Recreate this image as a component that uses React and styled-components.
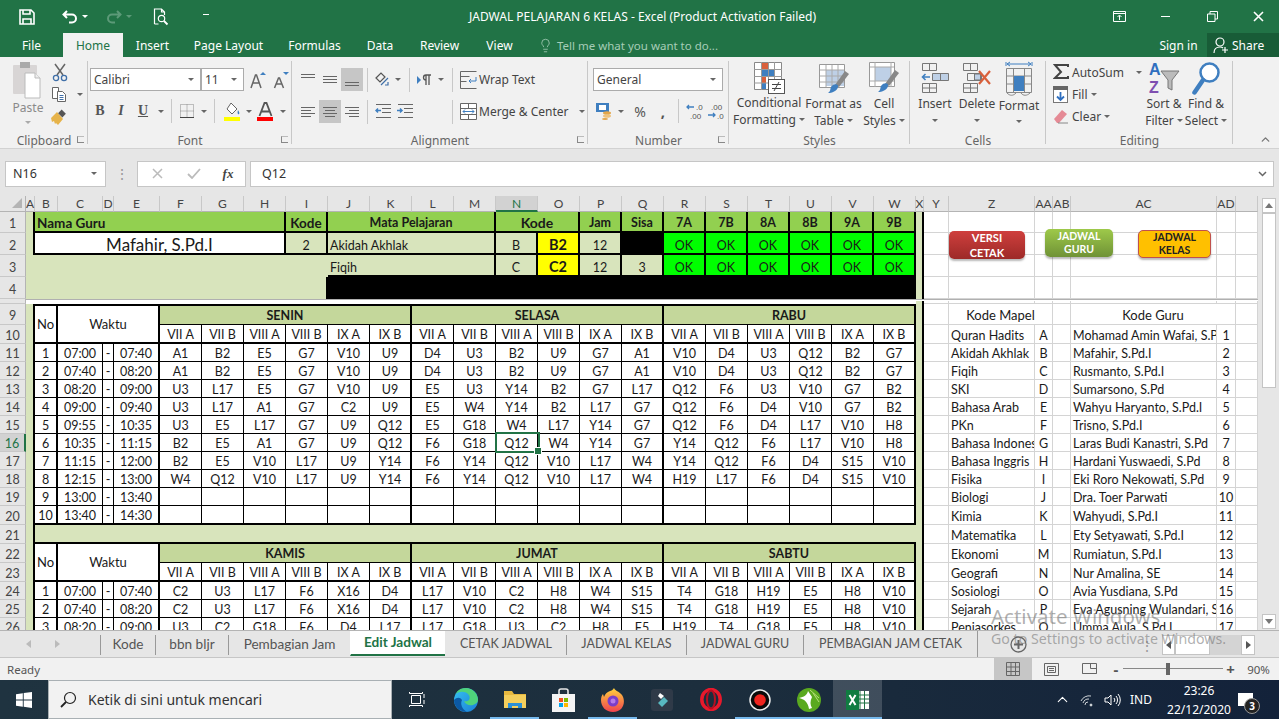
import React from 'react';
import styled, { createGlobalStyle } from 'styled-components';
import { ChevronUp, Lightbulb } from 'lucide-react';

const GlobalStyle = createGlobalStyle`
  html, body { margin: 0; padding: 0; overflow: hidden; background: #fff; }
  * { box-sizing: border-box; }
  svg { display: block; flex: none; }
`;

const UI = '"Noto Sans", "Open Sans", sans-serif';
const BOOK = 'Lato, "Open Sans", sans-serif';
const LIGHT = '#d8e4bc';
const HEAD = '#92d050';
const DAY = '#c4d79b';
const GRID = '#d4d4d4';

/* window shell */
const Page = styled.div`
  position: relative;
  width: 1279px;
  height: 719px;
  overflow: hidden;
  display: flex;
  flex-direction: column;
  font-family: ${UI};
  color: #444;
`;

const TitleBar = styled.div`
  height: 33px;
  background: #217346;
  display: flex;
  align-items: center;
  color: #fff;
  flex: none;
`;

const Qat = styled.div`
  width: 469px;
  display: flex;
  align-items: center;
  flex: none;
`;

const Slot = styled.div`
  width: ${(p) => p.$w}px;
  height: ${(p) => p.$h || 22}px;
  display: flex;
  align-items: center;
  justify-content: center;
  flex: none;
  background: ${(p) => p.$bg || 'transparent'};
`;

const Title = styled.div`
  flex: 1;
  font-size: 12px;
  white-space: nowrap;
`;

const TabBar = styled.div`
  height: 24px;
  background: #217346;
  display: flex;
  align-items: stretch;
  color: #fff;
  font-size: 12px;
  flex: none;
`;

const Tab = styled.div`
  width: ${(p) => p.$w}px;
  display: flex;
  align-items: center;
  justify-content: center;
  flex: none;
  padding-left: ${(p) => p.$pl || 0}px;
  background: ${(p) => (p.$active ? '#f1f1f1' : 'transparent')};
  color: ${(p) => (p.$active ? '#217346' : '#fff')};
`;

const Tell = styled.div`
  flex: 1;
  display: flex;
  align-items: center;
  gap: 4px;
  padding-left: 12px;
  color: #a6cdb7;
  font-size: 11.5px;
`;

const ShareTab = styled.div`
  width: 72px;
  background: #185c37;
  display: flex;
  align-items: center;
  gap: 3px;
  padding-left: 6px;
`;

/* ribbon */
const Ribbon = styled.div`
  height: 92px;
  background: #f1f1f1;
  border-bottom: 1px solid #d2d2d2;
  display: flex;
  color: #444;
  font-size: 12px;
  flex: none;
`;

const Group = styled.div`
  width: ${(p) => p.$w}px;
  flex: none;
  display: flex;
  flex-direction: column;
  position: relative;
  padding-top: 4px;
  &::after {
    content: '';
    position: absolute;
    right: 0;
    top: 4px;
    bottom: 4px;
    width: 1px;
    background: #c8c8c8;
  }
`;

const GroupBody = styled.div`
  flex: 1;
  display: flex;
  padding-left: ${(p) => p.$pl || 0}px;
  min-height: 0;
`;

const GroupLabel = styled.div`
  height: 20px;
  padding-top: 4px;
  font-size: 12px;
  color: #666;
  display: flex;
  align-items: center;
  justify-content: center;
  position: relative;
`;

const Launcher = styled.span`
  position: absolute;
  right: 4px;
  top: 8px;
  width: 7px;
  height: 7px;
  border-left: 1px solid #888;
  border-bottom: 1px solid #888;
  border-top: 1px solid #bbb;
`;

const Stack = styled.div`
  display: flex;
  flex-direction: column;
  width: ${(p) => (p.$w ? `${p.$w}px` : 'auto')};
  flex: none;
`;

const Collapse = styled.div`
  flex: 1;
  display: flex;
  align-items: flex-end;
  justify-content: flex-end;
  padding: 0 7px 2px 0;
`;

const Line = styled.div`
  display: flex;
  align-items: center;
  height: ${(p) => p.$h || 24}px;
  margin-top: ${(p) => p.$mt || 0}px;
  padding-left: ${(p) => p.$pl || 0}px;
  white-space: nowrap;
`;

const Caret = styled.span`
  width: 0;
  height: 0;
  border-left: 3px solid transparent;
  border-right: 3px solid transparent;
  border-top: 3px solid ${(p) => p.$c || '#666'};
  margin-left: ${(p) => p.$ml || 0}px;
  flex: none;
`;

const Sep = styled.div`
  width: 1px;
  height: 24px;
  background: #c8c8c8;
  margin: 0 ${(p) => p.$m ?? 4}px;
  flex: none;
`;

const Select = styled.div`
  width: ${(p) => p.$w}px;
  height: 23px;
  background: #fff;
  border: 1px solid #ababab;
  margin-left: ${(p) => p.$ml || 0}px;
  display: flex;
  align-items: center;
  justify-content: space-between;
  padding: 0 6px 0 3px;
  font-size: 12px;
  flex: none;
`;

const BigBtn = styled.div`
  width: ${(p) => p.$w}px;
  flex: none;
  display: flex;
  flex-direction: column;
  align-items: center;
  text-align: center;
  font-size: 12px;
  color: ${(p) => (p.$dim ? '#8a8a8a' : '#444')};
  white-space: nowrap;
`;

const BigIcon = styled.div`
  height: 37px;
  display: flex;
  align-items: center;
  justify-content: center;
`;

const LabelLine = styled.div`
  height: 17px;
  display: flex;
  align-items: center;
  justify-content: center;
  gap: 3px;
`;

const Caption = styled.span`
  margin-left: ${(p) => p.$ml || 1}px;
`;

const SmallBold = styled.span`
  font-family: "Liberation Serif", serif;
  font-weight: 700;
  font-style: ${(p) => (p.$i ? 'italic' : 'normal')};
  text-decoration: ${(p) => (p.$u ? 'underline' : 'none')};
  font-size: 14px;
  color: #555;
`;

const Glyph = styled.span`
  font-size: ${(p) => p.$fs || 14}px;
  font-weight: ${(p) => p.$fw || 400};
  color: #555;
`;

/* formula bar */
const FormulaBar = styled.div`
  height: 47px;
  background: #e6e6e6;
  display: flex;
  align-items: center;
  padding: 2px 5px 0;
  font-size: 12.5px;
  flex: none;
`;

const NameBox = styled.div`
  width: 101px;
  height: 26px;
  background: #fff;
  border: 1px solid #c6c6c6;
  display: flex;
  align-items: center;
  justify-content: space-between;
  padding: 0 8px 0 7px;
  color: #333;
`;

const Dots = styled.div`
  width: 31px;
  text-align: center;
  color: #999;
  font-size: 14px;
`;

const FxBox = styled.div`
  width: 109px;
  height: 26px;
  background: #fff;
  border: 1px solid #c6c6c6;
  display: flex;
  align-items: center;
  flex: none;
`;

const Fx = styled.span`
  font-family: "Liberation Serif", serif;
  font-style: italic;
  font-weight: 700;
  font-size: 13px;
`;

const FormulaInput = styled.div`
  flex: 1;
  height: 26px;
  margin-left: 4px;
  background: #fff;
  border: 1px solid #c6c6c6;
  display: flex;
  align-items: center;
  justify-content: space-between;
  padding: 0 6px 0 11px;
  color: #333;
`;

/* sheet */
const SheetArea = styled.div`
  height: 434px;
  display: flex;
  overflow: hidden;
  flex: none;
  background: #e6e6e6;
`;

const Sheet = styled.div`
  width: 1258px;
  flex: none;
  display: grid;
  grid-template-columns: 26px 9px 23px 45px 11px 46px repeat(18, 42px) 8px 25px 86px 18px 18px 146px 19px 22px;
  grid-template-rows: 16px 21px 22px 22px 22px 2px 3px 21px 19px repeat(8, 18px) 18px 19px 19px 19px 19px 18px 18px 18px;
  font-family: ${BOOK};
  font-size: 12.5px;
  color: #1a1a1a;
  background: #fff;
`;

const Cell = styled.div`
  grid-column: ${(p) => p.$c} / span ${(p) => p.$cs || 1};
  grid-row: ${(p) => p.$r} / span ${(p) => p.$rs || 1};
  display: flex;
  align-items: center;
  justify-content: ${(p) => (p.$left ? 'flex-start' : 'center')};
  padding: ${(p) => p.$pt ?? 2}px 0 0 ${(p) => (p.$left ? 2 : 0)}px;
  background: ${(p) => p.$bg || '#fff'};
  color: ${(p) => p.$fg || 'inherit'};
  font-size: ${(p) => p.$fs || 12.5}px;
  font-weight: ${(p) => (p.$bold ? 700 : 400)};
  border-style: solid;
  border-color: ${(p) => p.$line || '#000'};
  border-width: ${(p) => p.$b || '0'};
  white-space: nowrap;
  overflow: hidden;
  min-width: 0;
  min-height: 0;
  position: relative;
`;

const ColHead = styled.div`
  grid-column: ${(p) => p.$c};
  grid-row: 1;
  background: ${(p) => (p.$on ? '#d2d2d2' : '#e6e6e6')};
  border-right: 1px solid #c8c8c8;
  border-bottom: ${(p) => (p.$on ? '2px solid #217346' : '1px solid #b4b4b4')};
  font-family: ${BOOK};
  font-size: 12px;
  color: ${(p) => (p.$on ? '#217346' : '#444')};
  display: flex;
  align-items: center;
  justify-content: center;
`;

const Corner = styled.div`
  grid-column: 1;
  grid-row: 1;
  background: #e6e6e6;
  border-right: 1px solid #b4b4b4;
  border-bottom: 1px solid #b4b4b4;
  display: flex;
  align-items: flex-end;
  justify-content: flex-end;
  padding: 0 3px 3px 0;
`;

const RowHead = styled.div`
  grid-column: 1;
  grid-row: ${(p) => p.$r};
  background: ${(p) => (p.$on ? '#d2d2d2' : '#e6e6e6')};
  border-right: ${(p) => (p.$on ? '2px solid #217346' : '1px solid #b4b4b4')};
  border-bottom: 1px solid #c8c8c8;
  padding-top: ${(p) => (p.$r < 6 ? 3 : 2)}px;
  font-size: 12.5px;
  color: ${(p) => (p.$on ? '#217346' : '#444')};
  display: flex;
  align-items: center;
  justify-content: center;
  overflow: hidden;
`;

const Freeze = styled.div`
  grid-column: ${(p) => p.$c} / span ${(p) => p.$cs};
  grid-row: 6;
  background: #fff;
  border-top: 1px solid #b0b0b0;
`;

const Selected = styled.div`
  grid-column: 15;
  grid-row: 15;
  margin: -2px -2px -1px -1px;
  border: 2px solid #217346;
  position: relative;
  pointer-events: none;
  z-index: 2;
  &::after {
    content: '';
    position: absolute;
    right: -4px;
    bottom: -4px;
    width: 6px;
    height: 6px;
    background: #217346;
    border: 1px solid #fff;
  }
`;

const Shape = styled.div`
  position: absolute;
  left: ${(p) => p.$x}px;
  top: ${(p) => p.$y}px;
  width: ${(p) => p.$w}px;
  height: 28px;
  border-radius: 5px;
  background: ${(p) => p.$bg};
  border: ${(p) => (p.$edge ? `1px solid ${p.$edge}` : 'none')};
  box-shadow: 0 2px 2px rgba(0, 0, 0, 0.28);
  color: ${(p) => p.$fg};
  font-family: ${BOOK};
  font-size: ${(p) => p.$fs || 10.5}px;
  font-weight: 700;
  line-height: ${(p) => p.$lh || 13}px;
  display: flex;
  align-items: center;
  justify-content: center;
  text-align: center;
  z-index: 3;
`;

const VScroll = styled.div`
  flex: 1;
  padding: 2px 3px 1px 4px;
  display: flex;
  flex-direction: column;
`;

const ScrollGap = styled.div`
  flex: 1;
`;

const ScrollBtn = styled.div`
  height: ${(p) => p.$h || 15}px;
  background: #fff;
  border: 1px solid #c4c4c4;
  display: flex;
  align-items: center;
  justify-content: center;
`;

const Tri = styled.span`
  width: 0;
  height: 0;
  border-left: 4px solid transparent;
  border-right: 4px solid transparent;
  ${(p) => (p.$up ? 'border-bottom: 5px solid #777;' : 'border-top: 5px solid #777;')}
`;

const Side = styled.span`
  width: 0;
  height: 0;
  border-top: 4px solid transparent;
  border-bottom: 4px solid transparent;
  ${(p) => (p.$left ? `border-right: 5px solid ${p.$c || '#555'};` : `border-left: 5px solid ${p.$c || '#555'};`)}
`;

/* sheet tabs */
const SheetTabs = styled.div`
  height: 28px;
  background: #e6e6e6;
  border-top: 1px solid #b4b4b4;
  border-bottom: 1px solid #c6c6c6;
  display: flex;
  align-items: flex-start;
  font-family: ${BOOK};
  color: #555;
  flex: none;
`;

const NavArrows = styled.div`
  width: 100px;
  height: 26px;
  display: flex;
  align-items: center;
  gap: 24px;
  padding-left: 26px;
  flex: none;
`;

const SheetTab = styled.div`
  width: ${(p) => p.$w}px;
  height: ${(p) => (p.$active ? 25 : 20)}px;
  margin-top: ${(p) => (p.$active ? 0 : 4)}px;
  padding-bottom: ${(p) => (p.$active ? 1 : 3)}px;
  flex: none;
  display: flex;
  align-items: center;
  justify-content: center;
  white-space: nowrap;
  font-size: ${(p) => (p.$upper ? 12.5 : 13.6)}px;
  background: ${(p) => (p.$active ? '#fff' : 'transparent')};
  color: ${(p) => (p.$active ? '#217346' : '#555')};
  font-weight: ${(p) => (p.$active ? 700 : 400)};
  border-left: 1px solid ${(p) => (p.$active || p.$open ? 'transparent' : '#999')};
  border-bottom: ${(p) => (p.$active ? '2px solid #217346' : '0')};
`;

const AddSheet = styled.div`
  width: 50px;
  height: 26px;
  flex: none;
  display: flex;
  align-items: center;
  justify-content: flex-end;
  border-left: 1px solid #999;
`;

const HScroll = styled.div`
  margin-left: 104px;
  margin-top: 4px;
  display: flex;
  align-items: center;
  height: 20px;
  flex: none;
`;

const HBtn = styled.div`
  width: ${(p) => p.$w}px;
  height: 20px;
  background: ${(p) => p.$bg || '#fff'};
  border: ${(p) => (p.$flat ? 'none' : '1px solid #c4c4c4')};
  display: flex;
  align-items: center;
  justify-content: center;
`;

/* status bar */
const StatusBar = styled.div`
  height: 22px;
  background: #f1f1f1;
  display: flex;
  align-items: center;
  font-size: 11.5px;
  color: #555;
  padding-left: 7px;
  flex: none;
`;

const StatusText = styled.div`
  width: 987px;
  flex: none;
`;

const ViewBtn = styled.div`
  width: 38px;
  height: 22px;
  display: flex;
  align-items: center;
  justify-content: center;
  background: ${(p) => (p.$on ? '#c6c6c6' : 'transparent')};
  flex: none;
`;

const Zoomer = styled.div`
  width: 100px;
  height: 12px;
  position: relative;
  flex: none;
  &::before {
    content: '';
    position: absolute;
    left: 0;
    right: 0;
    top: 5px;
    height: 1px;
    background: #888;
  }
`;

const ZoomThumb = styled.span`
  position: absolute;
  left: 43px;
  top: 0;
  width: 4px;
  height: 12px;
  background: #666;
`;

/* taskbar */
const Taskbar = styled.div`
  height: 39px;
  background: linear-gradient(90deg, #1f3340 0%, #1c2e3d 55%, #13223a 100%);
  display: flex;
  align-items: center;
  color: #fff;
  flex: none;
`;

const SearchBox = styled.div`
  width: 344px;
  height: 39px;
  background: #f2f2f2;
  border: 1px solid #a9b0b4;
  display: flex;
  align-items: center;
  gap: 11px;
  padding-left: 11px;
  color: #333;
  font-size: 14px;
  flex: none;
`;

const TaskIcon = styled.div`
  width: ${(p) => p.$w || 49}px;
  height: 39px;
  flex: none;
  display: flex;
  align-items: center;
  justify-content: center;
  background: ${(p) => (p.$active ? 'rgba(255,255,255,0.17)' : 'transparent')};
  box-shadow: ${(p) => (p.$run ? `inset 0 -2px 0 #76b9ed` : 'none')};
`;

const TrayText = styled.div`
  font-size: ${(p) => p.$fs || 12}px;
  width: ${(p) => p.$w}px;
  margin-left: ${(p) => p.$ml || 0}px;
  text-align: center;
  flex: none;
  line-height: 19px;
  white-space: nowrap;
`;

const Watermark = styled.div`
  position: absolute;
  left: 991px;
  top: ${(p) => p.$y}px;
  font-family: ${UI};
  font-size: ${(p) => p.$fs}px;
  color: rgba(110, 110, 110, 0.55);
  white-space: nowrap;
  pointer-events: none;
  z-index: 5;
`;

const Badge = styled.span`
  position: absolute;
  right: -7px;
  bottom: -8px;
  width: 16px;
  height: 16px;
  border-radius: 50%;
  background: #222;
  border: 1px solid #999;
  font-size: 10px;
  font-weight: 700;
  display: flex;
  align-items: center;
  justify-content: center;
`;

const Notify = styled.div`
  position: relative;
  width: 15px;
  height: 13px;
  background: #fff;
  flex: none;
`;

/* icons */
const Lines = ({ rows, color = '#666', w = 16 }) => (
  <svg width={w} height="15" viewBox={`0 0 ${w} 15`} stroke={color} strokeWidth="1">
    {rows.map(([a, b, y, c], i) => (
      <line key={i} x1={a} x2={b} y1={y + 0.5} y2={y + 0.5} stroke={c || color} />
    ))}
  </svg>
);

const Save = () => (
  <svg width="16" height="16" viewBox="0 0 16 16" fill="none" stroke="#fff" strokeWidth="1.6">
    <path d="M1 1h11l3 3v11H1z" />
    <path d="M4 1v4h7V1M4 15v-5h8v5" />
  </svg>
);

const Undo = ({ c }) => (
  <svg width="16" height="14" viewBox="0 0 16 14" fill="none" stroke={c} strokeWidth="2">
    <path d="M5 1 1.5 4.5 5 8M2 4.5h8a3.6 3.6 0 0 1 0 8H7" />
  </svg>
);

const Redo = ({ c }) => (
  <svg width="16" height="14" viewBox="0 0 16 14" fill="none" stroke={c} strokeWidth="2">
    <path d="M11 1l3.5 3.5L11 8M14 4.5H6a3.6 3.6 0 0 0 0 8h3" />
  </svg>
);

const Preview = () => (
  <svg width="16" height="18" viewBox="0 0 16 18" fill="none" stroke="#fff" strokeWidth="1.2">
    <path d="M1.5 16V1h7l3 3v3M8.500 1v3h3M1.500 16h4" />
    <circle cx="8.500" cy="10.500" r="3.200" />
    <path d="M11 13l3.500 3.500" strokeWidth="1.800" />
  </svg>
);

const Clipboard = () => (
  <svg width="32" height="38" viewBox="0 0 32 38">
    <rect x="1" y="4" width="24" height="29" rx="1" fill="#d8d5d5" />
    <rect x="8" y="1" width="10" height="6" fill="#aaa" />
    <path d="M13 12h10l5 5v20H13z" fill="#fff" stroke="#bbb" />
    <path d="M23 12v5h5" fill="#eee" stroke="#bbb" />
  </svg>
);

const Scissors = () => (
  <svg width="16" height="19" viewBox="0 0 16 19" fill="none" stroke="#3f6fa8" strokeWidth="1.300">
    <path d="M3 1l8 11M13 1 5 12" stroke="#666" strokeWidth="1.500" />
    <circle cx="4" cy="15" r="2.600" />
    <circle cx="12" cy="15" r="2.600" />
  </svg>
);

const Copy = () => (
  <svg width="16" height="17" viewBox="0 0 16 17" fill="#fff" stroke="#666">
    <path d="M1.500 1.500h6v11h-6z" />
    <path d="M6.500 5.500h5l3 3v7h-8z" />
    <path d="M8.500 9.500h4M8.500 11.500h4M8.500 13.500h4" stroke="#3f6fa8" />
  </svg>
);

const Painter = () => (
  <svg width="17" height="17" viewBox="0 0 17 17">
    <path d="M1 9l6-6 6 7-5 6-2-2-1 1-1-3-2 1z" fill="#e6b34a" />
    <rect x="9" y="2" width="6" height="5" transform="rotate(45 12 4.500)" fill="#555" />
  </svg>
);

const BorderIco = () => (
  <svg width="14" height="14" viewBox="0 0 14 14" stroke="#888" strokeDasharray="1 1" fill="none">
    <path d="M.5.500h13v13H.5zM.5 7h13M7 .5v13" />
    <path d="M0 13.500h14" stroke="#444" strokeDasharray="none" />
  </svg>
);

const FillIco = () => (
  <svg width="17" height="19" viewBox="0 0 17 19">
    <path d="M7 1l6 6-5 5-5-5z" fill="#fff" stroke="#666" />
    <path d="M14 8c1 2 2 3 1 4s-2-1-1-4z" fill="#3f7fc0" />
    <rect x="0" y="15" width="16" height="4" fill="#ffff00" />
  </svg>
);

const ColorA = () => (
  <svg width="17" height="19" viewBox="0 0 17 19">
    <path d="M2.500 14 7.500 1h2l5 13M4.500 9.500h8" fill="none" stroke="#555" strokeWidth="1.800" />
    <rect x="0" y="15" width="16" height="4" fill="#ff0000" />
  </svg>
);

const GrowA = ({ up }) => (
  <svg width="16" height="18" viewBox="0 0 16 18">
    <path d={up ? 'M1 17 5.500 4h1L11 17M3 12h6' : 'M1.500 17 5.500 7h1L10.500 17M3.500 13h5'} fill="none" stroke="#666" strokeWidth="1.500" />
    <path d={up ? 'M10 4l3-3 3 3z' : 'M10 1h6l-3 3z'} fill="#3f7fc0" />
  </svg>
);

const Orient = () => (
  <svg width="17" height="17" viewBox="0 0 17 17" fill="none" stroke="#555" strokeWidth="1.200">
    <path d="M2 7l5-5 4 4-5 5z" />
    <path d="M7 14 14 7M11 14h3v-3" stroke="#3f6fa8" />
  </svg>
);

const Para = () => (
  <svg width="17" height="12" viewBox="0 0 17 12">
    <path d="M0 2l4 4-4 4z" fill="#3f7fc0" />
    <path d="M9 11V1h5M12 1v10M9 6a2.500 2.500 0 0 1 0-5" fill="none" stroke="#555" strokeWidth="1.300" />
  </svg>
);

const Wrap = () => (
  <svg width="17" height="18" viewBox="0 0 17 18" fill="none" stroke="#666">
    <path d="M.5.500h16M.5 5.500h9M.5 10.500h6M.5.500v17h16" />
    <path d="M16 6v4H9m2-2-2 2 2 2" stroke="#3f7fc0" />
  </svg>
);

const Merge = () => (
  <svg width="17" height="17" viewBox="0 0 17 17" fill="#fff" stroke="#666">
    <path d="M.5.500h16v16H.5zM.5 5.500h16M.5 11.500h16M8.500.500v5M8.500 11.500v5" />
    <path d="M3 8.500h11M5 6.500l-2 2 2 2M12 6.500l2 2-2 2" stroke="#3f7fc0" fill="none" />
  </svg>
);

const Indent = ({ rtl }) => (
  <svg width="16" height="15" viewBox="0 0 16 15" stroke="#666">
    <path d="M1 .5h15M7 4.500h9M7 8.500h9M1 13.500h15" />
    <path d={rtl ? 'M6 6.500H1M3 4.500l-2 2 2 2' : 'M0 6.500h5M3 4.500l2 2-2 2'} stroke="#3f7fc0" fill="none" strokeWidth="1.500" />
  </svg>
);

const Money = () => (
  <svg width="17" height="18" viewBox="0 0 17 18">
    <rect x="0" y="1" width="13" height="9" fill="#3f7fc0" />
    <rect x="3" y="3" width="7" height="5" fill="#fff" />
    <ellipse cx="11" cy="11" rx="4" ry="1.800" fill="#e3a64a" />
    <ellipse cx="11" cy="14" rx="4" ry="1.800" fill="#eec27c" />
    <ellipse cx="9" cy="17" rx="3" ry="1" fill="#e3a64a" />
  </svg>
);

const Decimal = ({ left }) => (
  <svg width="20" height="17" viewBox="0 0 20 17" fontSize="8" fontFamily="Liberation Sans, sans-serif" fill="#555">
    {left ? (
      <>
        <path d="M9 4H2M4 2 2 4l2 2" fill="none" stroke="#3f7fc0" strokeWidth="1.300" />
        <text x="11" y="7">.0</text>
        <text x="5" y="16">.00</text>
      </>
    ) : (
      <>
        <text x="5" y="7">.00</text>
        <path d="M2 12h7M7 10l2 2-2 2" fill="none" stroke="#3f7fc0" strokeWidth="1.300" />
        <text x="11" y="16">.0</text>
      </>
    )}
  </svg>
);

const CondFmt = () => (
  <svg width="31" height="32" viewBox="0 0 31 32">
    <path d="M.5.500h27v27H.5z" fill="#fff" stroke="#888" />
    <rect x="7" y="1" width="7" height="7" fill="#d9603b" />
    <rect x="7" y="8" width="13" height="7" fill="#3f7fc0" />
    <rect x="7" y="15" width="5" height="6" fill="#d9603b" />
    <rect x="7" y="21" width="5" height="6" fill="#3f7fc0" />
    <path d="M7.500 0v28M14.500 0v28M20.500 0v28M0 7.500h28M0 14.500h28M0 21h28" stroke="#999" />
    <rect x="14.500" y="17.500" width="16" height="14" fill="#fff" stroke="#555" />
    <path d="M18 22.500h9M18 26.500h9M25 20l-5 9" stroke="#444" />
  </svg>
);

const TableFmt = () => (
  <svg width="30" height="34" viewBox="0 0 30 34">
    <path d="M.5 3.500h25v23H.5z" fill="#fff" stroke="#999" />
    <rect x="7" y="9" width="18" height="16" fill="#bed0e6" />
    <path d="M7 4v22M13 4v22M19 4v22M1 9h24M1 15h24M1 21h24" stroke="#aaa" />
    <path d="M16 24 26 10l4 3-10 13z" fill="#888" />
    <path d="M12 26c3-4 8-3 7 0-1 4-6 6-10 6 3-2 2-4 3-6z" fill="#3f7fc0" />
  </svg>
);

const CellStyle = () => (
  <svg width="30" height="34" viewBox="0 0 30 34">
    <path d="M.5 1.500h25v24H.5z" fill="#fff" stroke="#999" />
    <rect x="6" y="6" width="16" height="14" fill="#bed0e6" />
    <path d="M6 1v25M22 1v25M1 6h24M1 20h24" stroke="#aaa" />
    <path d="M16 23 26 9l4 3-10 13z" fill="#888" />
    <path d="M12 25c3-4 8-3 7 0-1 4-6 6-10 6 3-2 2-4 3-6z" fill="#3f7fc0" />
  </svg>
);

const InsertIco = () => (
  <svg width="28" height="30" viewBox="0 0 28 30" fill="none" stroke="#777">
    <path d="M1.500.500h14v7h-14zM8.500.500v7M1.500 20.500h14v9h-14zM8.500 20.500v9M1.500 25h14" />
    <path d="M11.500 10.500h16v7h-16zM19.500 10.500v7" fill="#bed0e6" />
    <path d="M9 14H2M4.500 11 1.500 14l3 3" stroke="#3f7fc0" strokeWidth="1.600" />
  </svg>
);

const DeleteIco = () => (
  <svg width="30" height="30" viewBox="0 0 30 30" fill="none" stroke="#777">
    <path d="M1.500.500h14v7h-14zM8.500.500v7M1.500 20.500h14v9h-14zM8.500 20.500v9M1.500 25h14M5.500 10.500h14v7h-14z" />
    <path d="M12.500 11h6v6h-6z" fill="#bed0e6" />
    <path d="M17 8l11 13M28 8 17 21" stroke="#d9603b" strokeWidth="2.200" />
  </svg>
);

const FormatIco = () => (
  <svg width="28" height="36" viewBox="0 0 28 36" fill="none" stroke="#888">
    <path d="M2 3h24" stroke="#3f7fc0" />
    <path d="M1 1v4M27 1v4M5 1 2 3l3 2M23 1l3 2-3 2" stroke="#3f7fc0" />
    <path d="M1.500 7.500h25v24h-25zM8.500 7.500v24M19.500 7.500v24M1.500 15h25M1.500 23h25" />
    <rect x="9" y="15" width="10" height="15" fill="#3f7fc0" stroke="none" />
    <path d="M2 32c3 3 6 3 9 0M16 32c2 3 6 3 9 0" />
  </svg>
);

const SigmaIco = () => (
  <svg width="16" height="16" viewBox="0 0 16 16" fill="none" stroke="#444" strokeWidth="2">
    <path d="M15 3V1H2l6 7-6 6h13v-2" />
  </svg>
);

const FillDown = () => (
  <svg width="15" height="17" viewBox="0 0 15 17">
    <rect x=".5" y=".5" width="14" height="16" fill="#fff" stroke="#777" />
    <rect x="0" y="0" width="15" height="4" fill="#666" />
    <path d="M7.500 6v8M4 10.500l3.500 3.500 3.500-3.500" fill="none" stroke="#2f6fbf" strokeWidth="1.800" />
  </svg>
);

const Eraser = () => (
  <svg width="15" height="15" viewBox="0 0 15 15">
    <path d="M1 10 9 1l5 4-8 9H4z" fill="#e58a95" />
    <path d="M5 14h10" stroke="#888" />
  </svg>
);

const SortIco = () => (
  <svg width="32" height="34" viewBox="0 0 32 34">
    <text x="1" y="14" fontSize="16" fontWeight="700" fill="#2f6fbf" fontFamily="Liberation Sans, sans-serif">A</text>
    <text x="1" y="32" fontSize="16" fontWeight="700" fill="#7f4fb0" fontFamily="Liberation Sans, sans-serif">Z</text>
    <path d="M13 10h18l-7 9v10l-4-2v-8z" fill="#bbb" stroke="#777" />
  </svg>
);

const FindIco = () => (
  <svg width="28" height="34" viewBox="0 0 28 34" fill="none">
    <circle cx="17.500" cy="11.500" r="9" stroke="#3f7fc0" strokeWidth="2.500" fill="#fff" />
    <path d="M2.500 31.500 11 19" stroke="#3f7fc0" strokeWidth="4.500" strokeLinecap="round" />
  </svg>
);

const WinLogo = () => (
  <svg width="16" height="16" viewBox="0 0 16 16" fill="#fff">
    <path d="M0 2.200 6.800 1.200v6.300H0zM7.700 1.100 16 0v7.500H7.700zM0 8.400h6.800v6.400L0 13.800zM7.700 8.400H16V16l-8.300-1.200z" />
  </svg>
);

const Edge = () => (
  <svg width="24" height="24" viewBox="0 0 24 24">
    <defs>
      <linearGradient id="edgeA" x1="0" y1="0" x2="1" y2="1">
        <stop offset="0" stopColor="#35c1f1" />
        <stop offset="1" stopColor="#1b7fd6" />
      </linearGradient>
    </defs>
    <circle cx="12" cy="12" r="12" fill="url(#edgeA)" />
    <path d="M24 12c0-7-6-12-12-12C6 0 3 3 2 6c3-3 9-3 12 0 2 2 2 4 1 6-2 2-5 1-5 1 1 3 5 5 9 4 3-1 5-3 5-5z" fill="#4fd37b" />
    <path d="M8 12c-2 4 0 9 5 12C6 24 0 19 0 12c3-3 6-3 8 0z" fill="#0c59a4" />
  </svg>
);

const Folder = () => (
  <svg width="22" height="19" viewBox="0 0 22 19">
    <path d="M0 1h8l2 3h12v14H0z" fill="#e8b93f" />
    <rect x="0" y="5" width="22" height="13" fill="#f5cf5c" />
    <path d="M4 18v-5h14v5h-4v-2H8v2z" fill="#2b8fd6" />
  </svg>
);

const Store = () => (
  <svg width="23" height="24" viewBox="0 0 23 24">
    <path d="M7 7V3a2 2 0 0 1 2-2h5a2 2 0 0 1 2 2v4" fill="none" stroke="#e6e6e6" strokeWidth="1.600" />
    <rect x="0" y="6" width="23" height="18" fill="#f4f4f4" />
    <rect x="7" y="10" width="4" height="4" fill="#f25022" />
    <rect x="12" y="10" width="4" height="4" fill="#7fba00" />
    <rect x="7" y="15" width="4" height="4" fill="#00a4ef" />
    <rect x="12" y="15" width="4" height="4" fill="#ffb900" />
  </svg>
);

const Firefox = () => (
  <svg width="24" height="24" viewBox="0 0 24 24">
    <defs>
      <linearGradient id="fox" x1="0" y1="0" x2="0" y2="1">
        <stop offset="0" stopColor="#ffd23c" />
        <stop offset="1" stopColor="#f0424f" />
      </linearGradient>
    </defs>
    <path d="M13 0c1 3 5 3 8 7 4 6 2 17-9 17C5 24 0 19 0 12c0-3 1-5 2-6l1 3c1-3 3-5 6-6 1 0 3-1 4-3z" fill="url(#fox)" />
    <circle cx="12" cy="13" r="5.500" fill="#7a3dc8" />
    <circle cx="12" cy="13" r="2.500" fill="#b57ae8" />
  </svg>
);

const Filmora = () => (
  <svg width="22" height="22" viewBox="0 0 22 22">
    <rect width="22" height="22" rx="3" fill="#2f3a48" />
    <path d="M13 8l4 4-6 6-4-4z" fill="#58b8c0" />
    <path d="M9 4l4 3-3 3-3-3z" fill="#fff" />
  </svg>
);

const Opera = () => (
  <svg width="22" height="23" viewBox="0 0 22 23">
    <ellipse cx="11" cy="11.500" rx="9.200" ry="10" fill="none" stroke="#e8192c" strokeWidth="3.500" />
    <ellipse cx="11" cy="11.500" rx="4" ry="9" fill="none" stroke="#b90e20" strokeWidth="2" />
  </svg>
);

const Bandi = () => (
  <svg width="22" height="22" viewBox="0 0 22 22">
    <circle cx="11" cy="11" r="10" fill="#0a0a0a" stroke="#eee" strokeWidth="1.500" />
    <circle cx="11" cy="11" r="5.800" fill="#f0241e" />
  </svg>
);

const Corel = () => (
  <svg width="24" height="24" viewBox="0 0 24 24">
    <circle cx="12" cy="12" r="12" fill="#5aa91f" />
    <path d="M2 10c5 1 9 4 10 11l3-1c-2-3-2-7 0-11L11 3c-1 4-4 6-9 7z" fill="#fff" />
    <path d="M13 2l9 8M16 5l6 9" stroke="#b8e07a" />
  </svg>
);

const ExcelIco = () => (
  <svg width="23" height="20" viewBox="0 0 23 20">
    <rect x="8" y="1" width="15" height="18" fill="#fff" />
    <path d="M14 1v18M18.500 1v18M8 5h15M8 9h15M8 13h15" stroke="#1f7244" />
    <rect x="0" y="0" width="13" height="20" fill="#107c41" />
    <path d="M3.500 5l6 10M9.500 5l-6 10" stroke="#fff" strokeWidth="2" />
  </svg>
);

/* sheet data */
const columns = ['A', 'B', 'C', 'D', 'E', 'F', 'G', 'H', 'I', 'J', 'K', 'L', 'M', 'N', 'O', 'P', 'Q', 'R', 'S', 'T', 'U', 'V', 'W', 'X', 'Y', 'Z', 'AA', 'AB', 'AC', 'AD', ''];

const rowNames = [
  [2, 1], [3, 2], [4, 3], [5, 4], [8, 9], [9, 10], [10, 11], [11, 12], [12, 13], [13, 14], [14, 15], [15, 16],
  [16, 17], [17, 18], [18, 19], [19, 20], [20, 21], [21, 22], [22, 23], [23, 24], [24, 25], [25, 26],
];

const classes = ['VII A', 'VII B', 'VIII A', 'VIII B', 'IX A', 'IX B'];
const times = [
  ['07:00', '07:40'], ['07:40', '08:20'], ['08:20', '09:00'], ['09:00', '09:40'], ['09:55', '10:35'],
  ['10:35', '11:15'], ['11:15', '12:00'], ['12:15', '13:00'], ['13:00', '13:40'], ['13:40', '14:30'],
];

const firstWeek = [
  'A1 B2 E5 G7 V10 U9 D4 U3 B2 U9 G7 A1 V10 D4 U3 Q12 B2 G7',
  'A1 B2 E5 G7 V10 U9 D4 U3 B2 U9 G7 A1 V10 D4 U3 Q12 B2 G7',
  'U3 L17 E5 G7 V10 U9 E5 U3 Y14 B2 G7 L17 Q12 F6 U3 V10 G7 B2',
  'U3 L17 A1 G7 C2 U9 E5 W4 Y14 B2 L17 G7 Q12 F6 D4 V10 G7 B2',
  'U3 E5 L17 G7 U9 Q12 E5 G18 W4 L17 Y14 G7 Q12 F6 D4 L17 V10 H8',
  'B2 E5 A1 G7 U9 Q12 F6 G18 Q12 W4 Y14 G7 Y14 Q12 F6 L17 V10 H8',
  'B2 E5 V10 L17 U9 Y14 F6 Y14 Q12 V10 L17 W4 Y14 Q12 F6 D4 S15 V10',
  'W4 Q12 V10 L17 U9 Y14 F6 Y14 Q12 V10 L17 W4 H19 L17 F6 D4 S15 V10',
  '', '',
];

const secondWeek = [
  'C2 U3 L17 F6 X16 D4 L17 V10 C2 H8 W4 S15 T4 G18 H19 E5 H8 V10',
  'C2 U3 L17 F6 X16 D4 L17 V10 C2 H8 W4 S15 T4 G18 H19 E5 H8 V10',
  'U3 C2 G18 F6 D4 L17 L17 G18 U3 C2 H8 F5 H19 T4 G18 F5 H8 V10',
];

const mapel = [
  ['Quran Hadits', 'A'], ['Akidah Akhlak', 'B'], ['Fiqih', 'C'], ['SKI', 'D'], ['Bahasa Arab', 'E'], ['PKn', 'F'],
  ['Bahasa Indonesia', 'G'], ['Bahasa Inggris', 'H'], ['Fisika', 'I'], ['Biologi', 'J'], ['Kimia', 'K'],
  ['Matematika', 'L'], ['Ekonomi', 'M'], ['Geografi', 'N'], ['Sosiologi', 'O'], ['Sejarah', 'P'], ['Penjasorkes', 'Q'],
];

const guru = [
  'Mohamad Amin Wafai, S.Pd.I', 'Mafahir, S.Pd.I', 'Rusmanto, S.Pd.I', 'Sumarsono, S.Pd', 'Wahyu Haryanto, S.Pd.I',
  'Trisno, S.Pd.I', 'Laras Budi Kanastri, S.Pd', 'Hardani Yuswaedi, S.Pd', 'Eki Roro Nekowati, S.Pd', 'Dra. Toer Parwati',
  'Wahyudi, S.Pd.I', 'Ety Setyawati, S.Pd.I', 'Rumiatun, S.Pd.I', 'Nur Amalina, SE', 'Avia Yusdiana, S.Pd',
  'Eva Agusning Wulandari, S.Pd', 'Umma Aula, S.Pd.I',
];

const dayRight = (c) => (c === 12 || c === 18 || c === 24 ? 2 : 1);

const Schedule = ({ top, days, rows, topLine }) => {
  const dayRow = top;
  const classRow = top + 1;
  const edge = topLine ? 2 : 0;
  return (
    <>
      <Cell $c={3} $r={dayRow} $rs={2} $pt={0} $b={`${edge}px 2px 2px 0`} $fs={13}>No</Cell>
      <Cell $c={4} $cs={3} $r={dayRow} $rs={2} $pt={0} $b={`${edge}px 2px 2px 0`} $fs={13}>Waktu</Cell>
      {days.map((day, i) => (
        <Cell key={day} $c={7 + i * 6} $cs={6} $r={dayRow} $pt={0} $bg={DAY} $bold $b={`${edge}px 2px 1px 0`}>{day}</Cell>
      ))}
      {days.map((day, i) =>
        classes.map((name, j) => (
          <Cell key={day + name} $c={7 + i * 6 + j} $r={classRow} $b={`0 ${dayRight(7 + i * 6 + j)}px 2px 0`}>{name}</Cell>
        ))
      )}
      {rows.map((line, i) => {
        const r = top + 2 + i;
        const last = i === 9 ? 2 : 1;
        const codes = line ? line.split(' ') : Array(18).fill('');
        return (
          <React.Fragment key={r}>
            <Cell $c={3} $r={r} $b={`0 2px ${last}px 0`}>{i + 1}</Cell>
            <Cell $c={4} $r={r} $b={`0 1px ${last}px 0`}>{times[i][0]}</Cell>
            <Cell $c={5} $r={r} $b={`0 1px ${last}px 0`}>-</Cell>
            <Cell $c={6} $r={r} $b={`0 2px ${last}px 0`}>{times[i][1]}</Cell>
            {codes.map((code, j) => (
              <Cell key={j} $c={7 + j} $r={r} $b={`0 ${dayRight(7 + j)}px ${last}px 0`}>{code}</Cell>
            ))}
          </React.Fragment>
        );
      })}
    </>
  );
};

const TopBlock = () => (
  <>
    <Cell $c={3} $cs={7} $r={2} $bg={HEAD} $bold $left $fs={13.5} $b="0 2px 2px 0">Nama Guru</Cell>
    <Cell $c={10} $r={2} $bg={HEAD} $bold $fs={13.5} $b="0 2px 2px 0">Kode</Cell>
    <Cell $c={11} $cs={4} $r={2} $bg={HEAD} $bold $b="0 2px 2px 0">Mata Pelajaran</Cell>
    <Cell $c={15} $cs={2} $r={2} $bg={HEAD} $bold $fs={14} $b="0 2px 2px 0">Kode</Cell>
    <Cell $c={17} $r={2} $bg={HEAD} $bold $b="0 2px 2px 0">Jam</Cell>
    <Cell $c={18} $r={2} $bg={HEAD} $bold $b="0 2px 2px 0">Sisa</Cell>
    {['7A', '7B', '8A', '8B', '9A', '9B'].map((n, i) => (
      <Cell key={n} $c={19 + i} $r={2} $bg={HEAD} $bold $b="0 2px 2px 0">{n}</Cell>
    ))}
    <Cell $c={3} $cs={7} $r={3} $fs={17} $pt={3} $b="0 2px 2px 0">Mafahir, S.Pd.I</Cell>
    <Cell $c={10} $r={3} $bg={LIGHT} $pt={5} $b="0 2px 2px 0">2</Cell>
    <Cell $c={3} $cs={8} $r={4} $bg={LIGHT} />
    <Cell $c={3} $cs={8} $r={5} $bg={LIGHT} $b="0 2px 0 0" />
    {[
      [3, 'Akidah Akhlak', 'B', 'B2', '12', ''],
      [4, 'Fiqih', 'C', 'C2', '12', '3'],
    ].map(([r, name, code, full, jam, sisa]) => (
      <React.Fragment key={r}>
        <Cell $c={11} $cs={4} $r={r} $left $pt={5} $bg={LIGHT} $b="0 2px 2px 0">{name}</Cell>
        <Cell $c={15} $r={r} $pt={5} $bg={LIGHT} $b="0 2px 2px 0">{code}</Cell>
        <Cell $c={16} $r={r} $pt={2} $bg="#ffff00" $bold $fs={14.5} $b="0 2px 2px 0">{full}</Cell>
        <Cell $c={17} $r={r} $pt={5} $bg={LIGHT} $b="0 2px 2px 0">{jam}</Cell>
        <Cell $c={18} $r={r} $pt={5} $bg={sisa ? LIGHT : '#000'} $b="0 2px 2px 0">{sisa}</Cell>
        {[19, 20, 21, 22, 23, 24].map((c) => (
          <Cell key={c} $c={c} $r={r} $pt={5} $bg="#00ff00" $b="0 2px 2px 0">OK</Cell>
        ))}
      </React.Fragment>
    ))}
    <Cell $c={11} $cs={14} $r={5} $bg="#000" />
  </>
);

const Gutters = () => {
  const rows = [2, 3, 4, 5, 8, 9, 10, 11, 12, 13, 14, 15, 16, 17, 18, 19, 20, 21, 22, 23, 24, 25];
  return (
    <>
      {rows.map((r) => (
        <React.Fragment key={r}>
          <Cell $c={2} $r={r} $bg={LIGHT} $b={r === 4 || r === 5 ? '0' : '0 2px 0 0'} />
          <Cell $c={25} $r={r} $bg={LIGHT} $b="0 2px 0 0" />
        </React.Fragment>
      ))}
      <Cell $c={25} $r={7} $bg={LIGHT} $b="0 2px 0 0" />
      <Cell $c={3} $cs={22} $r={20} $bg={LIGHT} $b="0 0 2px 0" />
    </>
  );
};

const Lookup = () => {
  const topRows = [2, 3, 4, 5, 7];
  const plainCols = [26, 27, 28, 29, 30, 31, 32];
  return (
    <>
      {topRows.map((r) =>
        plainCols.map((c) => <Cell key={`${r}-${c}`} $c={c} $r={r} $line={GRID} $b="0 1px 1px 0" />)
      )}
      <Cell $c={26} $r={8} $line={GRID} $b="0 1px 1px 0" />
      <Cell $c={27} $cs={2} $r={8} $line={GRID} $b="0 1px 1px 0" $fs={13}>Kode Mapel</Cell>
      <Cell $c={29} $r={8} $line={GRID} $b="0 1px 1px 0" />
      <Cell $c={30} $cs={2} $r={8} $line={GRID} $b="0 1px 1px 0" $fs={13}>Kode Guru</Cell>
      <Cell $c={32} $r={8} $line={GRID} $b="0 1px 1px 0" />
      {mapel.map(([name, code], i) => {
        const r = 9 + i;
        return (
          <React.Fragment key={r}>
            <Cell $c={26} $r={r} $line={GRID} $b="0 1px 1px 0" />
            <Cell $c={27} $r={r} $left $line={GRID} $b="0 1px 1px 0">{name}</Cell>
            <Cell $c={28} $r={r} $line={GRID} $b="0 1px 1px 0">{code}</Cell>
            <Cell $c={29} $r={r} $line={GRID} $b="0 1px 1px 0" />
            <Cell $c={30} $r={r} $left $line={GRID} $b="0 1px 1px 0">{guru[i]}</Cell>
            <Cell $c={31} $r={r} $line={GRID} $b="0 1px 1px 0">{i + 1}</Cell>
            <Cell $c={32} $r={r} $line={GRID} $b="0 1px 1px 0" />
          </React.Fragment>
        );
      })}
    </>
  );
};

const GridIco = () => (
  <svg width="14" height="14" viewBox="0 0 14 14" fill="none" stroke="#666">
    <path d="M.5.500h13v13H.5zM5 .5v13M9.500.5v13M.5 5h13M.5 9.500h13" />
  </svg>
);

export default function App() {
  return (
    <Page>
      <GlobalStyle />

      <TitleBar>
        <Qat>
          <Slot $w={19} />
          <Slot $w={16}><Save /></Slot>
          <Slot $w={27} />
          <Slot $w={16}><Undo c="#fff" /></Slot>
          <Slot $w={14}><Caret $c="#fff" /></Slot>
          <Slot $w={14} />
          <Slot $w={16}><Redo c="#5c9a78" /></Slot>
          <Slot $w={14}><Caret $c="#5c9a78" /></Slot>
          <Slot $w={17} />
          <Slot $w={16}><Preview /></Slot>
          <Slot $w={29} />
          <Slot $w={16}><Lines color="#fff" w={8} rows={[[1, 7, 5]]} /></Slot>
        </Qat>
        <Title>JADWAL PELAJARAN 6 KELAS - Excel (Product Activation Failed)</Title>
        <Slot $w={20}>
          <svg width="13" height="11" viewBox="0 0 13 11" fill="none" stroke="#fff">
            <path d="M.5.500h12v10H.5zM.5 2.500h12M6.500 9V4.500M4.500 6l2-2 2 2" />
          </svg>
        </Slot>
        <Slot $w={26} />
        <Slot $w={20}><Lines color="#fff" w={9} rows={[[0, 9, 7]]} /></Slot>
        <Slot $w={27} />
        <Slot $w={20}>
          <svg width="11" height="11" viewBox="0 0 11 11" fill="none" stroke="#fff">
            <path d="M.5 3h7.500v7.500H.5zM3 3V.5h7.500V8H8" />
          </svg>
        </Slot>
        <Slot $w={26} />
        <Slot $w={20}>
          <svg width="11" height="11" viewBox="0 0 11 11" stroke="#fff" strokeWidth="1.600">
            <path d="M1 1l9 9M10 1l-9 9" />
          </svg>
        </Slot>
        <Slot $w={11} />
      </TitleBar>

      <TabBar>
        <Tab $w={63}>File</Tab>
        <Tab $w={60} $active>Home</Tab>
        <Tab $w={59}>Insert</Tab>
        <Tab $w={93}>Page Layout</Tab>
        <Tab $w={79}>Formulas</Tab>
        <Tab $w={52}>Data</Tab>
        <Tab $w={67}>Review</Tab>
        <Tab $w={53}>View</Tab>
        <Tell><Lightbulb size={15} strokeWidth={1.3} />Tell me what you want to do...</Tell>
        <Tab $w={66} $pl={9}>Sign in</Tab>
        <ShareTab>
          <svg width="16" height="18" viewBox="0 0 16 18" fill="none" stroke="#fff" strokeWidth="1.200">
            <circle cx="7" cy="6" r="4" />
            <path d="M1 17c0-4 2-6 6-6 1 0 2 0 3 1M12 11v6M9 14h6" />
          </svg>
          Share
        </ShareTab>
      </TabBar>

      <Ribbon>
        <Group $w={88}>
          <GroupBody $pl={12}>
            <BigBtn $w={32} $dim>
              <Clipboard />
              <LabelLine>Paste</LabelLine>
              <LabelLine><Caret $c="#aaa" /></LabelLine>
            </BigBtn>
            <Stack>
              <Line $h={23} $pl={8}><Scissors /></Line>
              <Line $h={24} $pl={7}><Copy /><Caret $ml={10} /></Line>
              <Line $h={22} $pl={6}><Painter /></Line>
            </Stack>
          </GroupBody>
          <GroupLabel>Clipboard<Launcher /></GroupLabel>
        </Group>

        <Group $w={204}>
          <GroupBody $pl={2}>
            <Stack>
              <Line $h={23} $mt={7}>
                <Select $w={111}>Calibri<Caret /></Select>
                <Select $w={43}>11<Caret /></Select>
                <Slot $w={6} />
                <Slot $w={16}><GrowA up /></Slot>
                <Slot $w={7} />
                <Slot $w={16}><GrowA /></Slot>
              </Line>
              <Line $h={24} $mt={8}>
                <Slot $w={20}><SmallBold>B</SmallBold></Slot>
                <Slot $w={22}><SmallBold $i>I</SmallBold></Slot>
                <Slot $w={22}><SmallBold $u>U</SmallBold></Slot>
                <Slot $w={14}><Caret /></Slot>
                <Sep $m={3} />
                <Slot $w={24}><BorderIco /></Slot>
                <Slot $w={10}><Caret /></Slot>
                <Sep $m={5} />
                <Slot $w={24}><FillIco /></Slot>
                <Slot $w={9}><Caret /></Slot>
                <Slot $w={24}><ColorA /></Slot>
                <Slot $w={12}><Caret /></Slot>
              </Line>
            </Stack>
          </GroupBody>
          <GroupLabel>Font<Launcher /></GroupLabel>
        </Group>

        <Group $w={296}>
          <GroupBody $pl={5}>
            <Stack>
              <Line $h={23} $mt={7}>
                <Slot $w={22} $h={23}><Lines rows={[[1, 15, 2], [1, 15, 5]]} /></Slot>
                <Slot $w={22} $h={23}><Lines rows={[[1, 15, 4], [1, 15, 7], [1, 15, 10]]} /></Slot>
                <Slot $w={22} $h={23} $bg="#c6c6c6"><Lines rows={[[1, 15, 10], [1, 15, 13]]} /></Slot>
                <Sep $m={4} />
                <Slot $w={20}><Orient /></Slot>
                <Slot $w={12}><Caret /></Slot>
                <Sep $m={5} />
                <Slot $w={20}><Para /></Slot>
                <Slot $w={12}><Caret /></Slot>
                <Sep $m={5} />
                <Slot $w={20}><Wrap /></Slot>
                <Caption>Wrap Text</Caption>
              </Line>
              <Line $h={23} $mt={9}>
                <Slot $w={22} $h={23}><Lines rows={[[1, 15, 3], [1, 11, 6], [1, 15, 9], [1, 11, 12]]} /></Slot>
                <Slot $w={22} $h={23} $bg="#c6c6c6"><Lines rows={[[1, 15, 3], [3, 13, 6], [1, 15, 9], [3, 13, 12]]} /></Slot>
                <Slot $w={22} $h={23}><Lines rows={[[1, 15, 3], [5, 15, 6], [1, 15, 9], [5, 15, 12]]} /></Slot>
                <Sep $m={4} />
                <Slot $w={22}><Indent rtl /></Slot>
                <Slot $w={22}><Indent /></Slot>
                <Slot $w={36} />
                <Sep $m={0} />
                <Slot $w={5} />
                <Slot $w={20}><Merge /></Slot>
                <Caption>Merge &amp; Center</Caption>
                <Caret $ml={10} />
              </Line>
            </Stack>
          </GroupBody>
          <GroupLabel>Alignment<Launcher /></GroupLabel>
        </Group>

        <Group $w={141}>
          <GroupBody $pl={5}>
            <Stack>
              <Line $h={23} $mt={7}><Select $w={130}>General<Caret /></Select></Line>
              <Line $h={24} $mt={8}>
                <Slot $w={22}><Money /></Slot>
                <Slot $w={12}><Caret /></Slot>
                <Slot $w={26}><Glyph>%</Glyph></Slot>
                <Slot $w={20}><Glyph $fs={15} $fw={700}>,</Glyph></Slot>
                <Sep $m={5} />
                <Slot $w={21}><Decimal left /></Slot>
                <Slot $w={21}><Decimal /></Slot>
              </Line>
            </Stack>
          </GroupBody>
          <GroupLabel>Number<Launcher /></GroupLabel>
        </Group>

        <Group $w={181}>
          <GroupBody>
            <BigBtn $w={80}>
              <BigIcon><CondFmt /></BigIcon>
              <LabelLine>Conditional</LabelLine>
              <LabelLine>Formatting<Caret /></LabelLine>
            </BigBtn>
            <BigBtn $w={49}>
              <BigIcon><TableFmt /></BigIcon>
              <LabelLine>Format as</LabelLine>
              <LabelLine>Table<Caret /></LabelLine>
            </BigBtn>
            <BigBtn $w={52}>
              <BigIcon><CellStyle /></BigIcon>
              <LabelLine>Cell</LabelLine>
              <LabelLine>Styles<Caret /></LabelLine>
            </BigBtn>
          </GroupBody>
          <GroupLabel>Styles</GroupLabel>
        </Group>

        <Group $w={136}>
          <GroupBody $pl={4}>
            <BigBtn $w={42}>
              <BigIcon><InsertIco /></BigIcon>
              <LabelLine>Insert</LabelLine>
              <LabelLine><Caret /></LabelLine>
            </BigBtn>
            <BigBtn $w={42}>
              <BigIcon><DeleteIco /></BigIcon>
              <LabelLine>Delete</LabelLine>
              <LabelLine><Caret /></LabelLine>
            </BigBtn>
            <BigBtn $w={42}>
              <BigIcon><FormatIco /></BigIcon>
              <LabelLine>Format</LabelLine>
              <LabelLine><Caret /></LabelLine>
            </BigBtn>
          </GroupBody>
          <GroupLabel>Cells</GroupLabel>
        </Group>

        <Group $w={187}>
          <GroupBody $pl={7}>
            <Stack $w={90}>
              <Line $h={23}><SigmaIco /><Caption $ml={3}>AutoSum</Caption><Caret $ml={12} /></Line>
              <Line $h={24}><FillDown /><Caption $ml={4}>Fill</Caption><Caret $ml={3} /></Line>
              <Line $h={23}><Eraser /><Caption $ml={4}>Clear</Caption><Caret $ml={3} /></Line>
            </Stack>
            <BigBtn $w={42}>
              <BigIcon><SortIco /></BigIcon>
              <LabelLine>Sort &amp;</LabelLine>
              <LabelLine>Filter<Caret /></LabelLine>
            </BigBtn>
            <BigBtn $w={42}>
              <BigIcon><FindIco /></BigIcon>
              <LabelLine>Find &amp;</LabelLine>
              <LabelLine>Select<Caret /></LabelLine>
            </BigBtn>
          </GroupBody>
          <GroupLabel>Editing</GroupLabel>
        </Group>

        <Collapse><ChevronUp size={13} strokeWidth={2.5} color="#777" /></Collapse>
      </Ribbon>

      <FormulaBar>
        <NameBox>N16<Caret /></NameBox>
        <Dots>⋮</Dots>
        <FxBox>
          <Slot $w={38}>
            <svg width="11" height="11" viewBox="0 0 11 11" stroke="#bbb" strokeWidth="1.500"><path d="M1 1l9 9M10 1l-9 9" /></svg>
          </Slot>
          <Slot $w={35}>
            <svg width="14" height="11" viewBox="0 0 14 11" fill="none" stroke="#bbb" strokeWidth="1.800"><path d="M1 6l4 4 8-9" /></svg>
          </Slot>
          <Slot $w={34}><Fx>fx</Fx></Slot>
        </FxBox>
        <FormulaInput>
          Q12
          <svg width="9" height="6" viewBox="0 0 9 6" fill="none" stroke="#666" strokeWidth="1.500"><path d="M1 1l3.500 3.500L8 1" /></svg>
        </FormulaInput>
      </FormulaBar>

      <SheetArea>
        <Sheet>
          <Corner>
            <svg width="10" height="10" viewBox="0 0 10 10"><path d="M10 0v10H0z" fill="#b4b4b4" /></svg>
          </Corner>
          {columns.map((name, i) => (
            <ColHead key={i} $c={i + 2} $on={name === 'N'}>{name}</ColHead>
          ))}
          {rowNames.map(([r, label]) => (
            <RowHead key={r} $r={r} $on={label === 16}>{label}</RowHead>
          ))}
          <RowHead $r={6} />
          <RowHead $r={7} />
          <Freeze $c={2} $cs={31} />
          <Gutters />
          <TopBlock />
          <Schedule top={8} days={['SENIN', 'SELASA', 'RABU']} rows={firstWeek} topLine />
          <Schedule top={21} days={['KAMIS', 'JUMAT', 'SABTU']} rows={secondWeek} />
          <Lookup />
          <Selected />
        </Sheet>
        <VScroll>
          <ScrollBtn><Tri $up /></ScrollBtn>
          <ScrollBtn $h={175} />
          <ScrollGap />
          <ScrollBtn><Tri /></ScrollBtn>
        </VScroll>
      </SheetArea>

      <Shape $x={949} $y={231} $w={76} $fs={11} $lh={15} $bg="linear-gradient(#cf3f3d,#9d2a28)" $fg="#fff">VERSI<br />CETAK</Shape>
      <Shape $x={1045} $y={229} $w={68} $bg="linear-gradient(#9ec94a,#6f9236)" $fg="#fff">JADWAL<br />GURU</Shape>
      <Shape $x={1138} $y={230} $w={73} $bg="#ffc000" $edge="#c0504d" $fg="#222">JADWAL<br />KELAS</Shape>

      <SheetTabs>
        <NavArrows><Side $left $c="#bbb" /><Side $c="#bbb" /></NavArrows>
        <SheetTab $w={55}>Kode</SheetTab>
        <SheetTab $w={73}>bbn bljr</SheetTab>
        <SheetTab $w={122}>Pembagian Jam</SheetTab>
        <SheetTab $w={95} $active>Edit Jadwal</SheetTab>
        <SheetTab $w={121} $upper $open>CETAK JADWAL</SheetTab>
        <SheetTab $w={120} $upper>JADWAL KELAS</SheetTab>
        <SheetTab $w={117} $upper>JADWAL GURU</SheetTab>
        <SheetTab $w={174} $upper>PEMBAGIAN JAM CETAK</SheetTab>
        <AddSheet>
          <svg width="17" height="17" viewBox="0 0 17 17" fill="none" stroke="#666" strokeWidth="1.300">
            <circle cx="8.500" cy="8.500" r="7.500" />
            <path d="M8.500 4v9M4 8.500h9" strokeWidth="2" />
          </svg>
        </AddSheet>
        <HScroll>
          <Dots>⋮</Dots>
          <HBtn $w={13}><Side $left /></HBtn>
          <HBtn $w={35} />
          <HBtn $w={31} $flat $bg="#d4d4d4" />
          <HBtn $w={14}><Side /></HBtn>
        </HScroll>
      </SheetTabs>

      <StatusBar>
        <StatusText>Ready</StatusText>
        <ViewBtn $on><GridIco /></ViewBtn>
        <ViewBtn>
          <svg width="15" height="13" viewBox="0 0 15 13" fill="none" stroke="#666">
            <path d="M.5.500h14v12H.5zM3.500 3.500h8v6h-8zM5 5.500h5M5 7.500h5" />
          </svg>
        </ViewBtn>
        <ViewBtn>
          <svg width="15" height="13" viewBox="0 0 15 13" fill="none" stroke="#666">
            <path d="M.5.500h14v10H.5zM8.500.5v5h6M.5 10.500h14" />
          </svg>
        </ViewBtn>
        <Slot $w={4} />
        <Slot $w={8} $h={12}><Glyph $fs={15} $fw={700}>-</Glyph></Slot>
        <Slot $w={3} />
        <Zoomer><ZoomThumb /></Zoomer>
        <Slot $w={15} $h={12}><Glyph $fs={15} $fw={700}>+</Glyph></Slot>
        <Slot $w={41}>90%</Slot>
      </StatusBar>

      <Taskbar>
        <Slot $w={48} $h={39}><WinLogo /></Slot>
        <SearchBox>
          <svg width="17" height="17" viewBox="0 0 17 17" fill="none" stroke="#222" strokeWidth="1.200">
            <circle cx="10" cy="7" r="5.500" />
            <path d="M6 11l-5 5" strokeWidth="1.800" />
          </svg>
          Ketik di sini untuk mencari
        </SearchBox>
        <TaskIcon>
          <svg width="16" height="15" viewBox="0 0 16 15" fill="none" stroke="#fff">
            <path d="M2.500 3.500h9v8h-9zM.5 0v1.500h13V0M.5 15v-1.500h13V15M15 2v4M15 8v4" />
          </svg>
        </TaskIcon>
        <TaskIcon><Edge /></TaskIcon>
        <TaskIcon $run><Folder /></TaskIcon>
        <TaskIcon><Store /></TaskIcon>
        <TaskIcon $run><Firefox /></TaskIcon>
        <TaskIcon><Filmora /></TaskIcon>
        <TaskIcon><Opera /></TaskIcon>
        <TaskIcon $run><Bandi /></TaskIcon>
        <TaskIcon $run><Corel /></TaskIcon>
        <TaskIcon $run $active><ExcelIco /></TaskIcon>
        <Slot $w={168} />
        <Slot $w={24} $h={16}><ChevronUp size={17} color="#fff" strokeWidth={1.5} /></Slot>
        <Slot $w={26} $h={16}>
          <svg width="14" height="14" viewBox="0 0 14 14" fill="none" stroke="#cfd4d8">
            <path d="M1 8a9 9 0 0 1 10-5M3 10a6 6 0 0 1 6-4M5 12a3 3 0 0 1 3-3" />
            <circle cx="11" cy="12" r="1" fill="#fff" />
          </svg>
        </Slot>
        <Slot $w={25} $h={16}>
          <svg width="17" height="14" viewBox="0 0 17 14" fill="none" stroke="#fff">
            <path d="M1 5v4h3l3 3V2L4 5zM10 5a3 3 0 0 1 0 4M12 3a6 6 0 0 1 0 8M14 1a9 9 0 0 1 0 12" />
          </svg>
        </Slot>
        <TrayText $w={32}>IND</TrayText>
        <TrayText $w={78} $ml={3}>23:26<br />22/12/2020</TrayText>
        <Notify><Badge>3</Badge></Notify>
      </Taskbar>

      <Watermark $y={602} $fs={20.5}>Activate Windows</Watermark>
      <Watermark $y={629} $fs={14.2}>Go to Settings to activate Windows.</Watermark>
    </Page>
  );
}
